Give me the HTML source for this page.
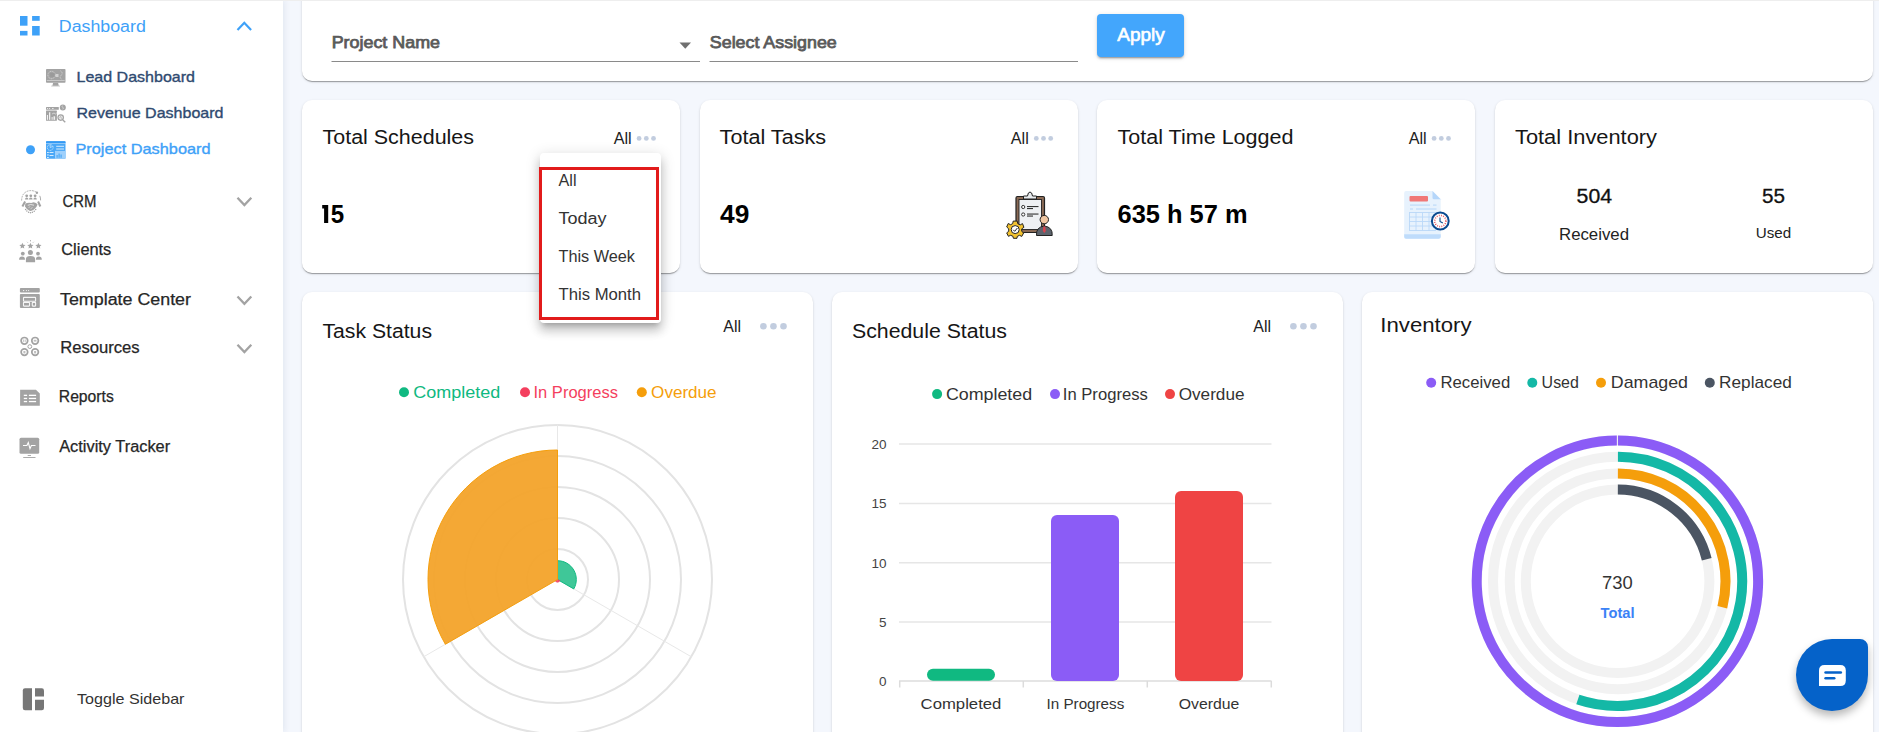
<!DOCTYPE html>
<html><head><meta charset="utf-8"><title>Project Dashboard</title>
<style>
html,body{margin:0;padding:0;}
body{width:1879px;height:732px;overflow:hidden;position:relative;background:#f4f7fd;font-family:"Liberation Sans", sans-serif;}
.sidebar{position:absolute;left:0;top:0;width:283px;height:732px;background:#fff;box-shadow:2px 0 6px rgba(20,40,90,0.07);z-index:2}
.topline{position:absolute;left:0;top:0;width:1879px;height:1px;background:#eeeeee;z-index:8}
.card{position:absolute;background:#fff;box-shadow: 0px 2px 1px -1px rgba(0,0,0,0.2), 0px 1px 1px 0px rgba(0,0,0,0.14), 0px 1px 3px 0px rgba(0,0,0,0.12);z-index:1}
.layer{position:absolute;left:0;top:0;z-index:4;}
.btn{position:absolute;left:1097px;top:14.3px;width:87px;height:42.6px;background:#43a6fc;border-radius:4px;z-index:3;box-shadow:0px 3px 1px -2px rgba(0,0,0,0.2),0px 2px 2px 0px rgba(0,0,0,0.14),0px 1px 5px 0px rgba(0,0,0,0.12)}
.menu{position:absolute;left:540px;top:153px;width:120.5px;height:169.5px;background:#fff;border-radius:4px;z-index:5;box-shadow:0px 5px 5px -3px rgba(0,0,0,0.2),0px 8px 10px 1px rgba(0,0,0,0.14),0px 3px 14px 2px rgba(0,0,0,0.12)}
.redbox{position:absolute;left:539px;top:167.3px;width:114px;height:147px;border:3px solid #e21b1b;z-index:6}
.chat{position:absolute;left:1796px;top:639px;width:72px;height:72px;background:#0562c9;border-radius:50% 8px 50% 50%;z-index:7;box-shadow:0 5px 9px rgba(0,0,0,0.28)}
</style></head><body>
<div class="topline"></div>
<div class="sidebar"></div>
<div class="card" style="left:302px;top:-20px;width:1571px;height:101px;border-radius:10px"></div><div class="card" style="left:302.0px;top:100px;width:378.125px;height:172.8px;border-radius:10px"></div><div class="card" style="left:699.625px;top:100px;width:378.125px;height:172.8px;border-radius:10px"></div><div class="card" style="left:1097.25px;top:100px;width:378.125px;height:172.8px;border-radius:10px"></div><div class="card" style="left:1494.875px;top:100px;width:378.125px;height:172.8px;border-radius:10px"></div><div class="card" style="left:302.0px;top:291.5px;width:510.67px;height:480px;border-radius:10px"></div><div class="card" style="left:832.17px;top:291.5px;width:510.67px;height:480px;border-radius:10px"></div><div class="card" style="left:1362.34px;top:291.5px;width:510.67px;height:480px;border-radius:10px"></div>
<div class="btn"></div>
<svg class="layer" width="1879" height="732" viewBox="0 0 1879 732" style="font-family:"Liberation Sans", sans-serif"><circle cx="557.5" cy="579.5" r="30.5" fill="none" stroke="#e3e3e3" stroke-width="2"/><circle cx="557.5" cy="579.5" r="61.5" fill="none" stroke="#e3e3e3" stroke-width="2"/><circle cx="557.5" cy="579.5" r="92.5" fill="none" stroke="#e3e3e3" stroke-width="2"/><circle cx="557.5" cy="579.5" r="123.5" fill="none" stroke="#e3e3e3" stroke-width="2"/><circle cx="557.5" cy="579.5" r="154.5" fill="none" stroke="#e3e3e3" stroke-width="2"/><line x1="557.5" y1="579.5" x2="557.50" y2="424.50" stroke="#e8e8e8" stroke-width="1"/><line x1="557.5" y1="579.5" x2="691.73" y2="657.00" stroke="#e8e8e8" stroke-width="1"/><line x1="557.5" y1="579.5" x2="423.27" y2="657.00" stroke="#e8e8e8" stroke-width="1"/><path d="M557.5,579.5 L557.50,560.70 A18.8,18.8 0 0 1 573.78,588.90 Z" fill="#35c492" fill-opacity="0.95" stroke="#10b981" stroke-width="1"/><path d="M557.5,579.5 L559.75,580.80 A2.6,2.6 0 0 1 555.25,580.80 Z" fill="#f0506e" fill-opacity="0.95" stroke="#f43f5e" stroke-width="1"/><path d="M557.5,579.5 L445.35,644.25 A129.5,129.5 0 0 1 557.50,450.00 Z" fill="#f3a32a" fill-opacity="0.95" stroke="#f59e0b" stroke-width="1"/><line x1="899" y1="444.1" x2="1271.5" y2="444.1" stroke="#e6e6e6" stroke-width="1.5"/><line x1="899" y1="503.4" x2="1271.5" y2="503.4" stroke="#e6e6e6" stroke-width="1.5"/><line x1="899" y1="562.7" x2="1271.5" y2="562.7" stroke="#e6e6e6" stroke-width="1.5"/><line x1="899" y1="622.0" x2="1271.5" y2="622.0" stroke="#e6e6e6" stroke-width="1.5"/><line x1="899" y1="681" x2="1271.5" y2="681" stroke="#dcdcdc" stroke-width="1.5"/><line x1="899.7" y1="681" x2="899.7" y2="687.5" stroke="#dcdcdc" stroke-width="1.5"/><line x1="1023.3" y1="681" x2="1023.3" y2="687.5" stroke="#dcdcdc" stroke-width="1.5"/><line x1="1147.3" y1="681" x2="1147.3" y2="687.5" stroke="#dcdcdc" stroke-width="1.5"/><line x1="1271.3" y1="681" x2="1271.3" y2="687.5" stroke="#dcdcdc" stroke-width="1.5"/><rect x="927" y="668.8" width="68" height="12" rx="6" fill="#10b981"/><rect x="1051" y="515" width="68" height="166" rx="6" fill="#8b5cf6"/><rect x="1175" y="491" width="68" height="190" rx="6" fill="#ef4444"/><circle cx="1617.6" cy="581.3" r="140.7" fill="none" stroke="#f2f2f2" stroke-width="10"/><path d="M1617.97,440.60 A140.7,140.7 0 1 1 1616.86,440.60" fill="none" stroke="#8b5cf6" stroke-width="10"/><circle cx="1617.6" cy="581.3" r="124.6" fill="none" stroke="#f2f2f2" stroke-width="10"/><path d="M1617.93,456.70 A124.6,124.6 0 1 1 1577.86,699.39" fill="none" stroke="#14b8a6" stroke-width="10"/><circle cx="1617.6" cy="581.3" r="107.9" fill="none" stroke="#f2f2f2" stroke-width="10"/><path d="M1617.88,473.40 A107.9,107.9 0 0 1 1722.34,607.22" fill="none" stroke="#f59e0b" stroke-width="10"/><circle cx="1617.6" cy="581.3" r="91.8" fill="none" stroke="#f2f2f2" stroke-width="10"/><path d="M1617.84,489.50 A91.8,91.8 0 0 1 1706.71,559.25" fill="none" stroke="#4b5563" stroke-width="10"/><circle cx="404" cy="392.3" r="5" fill="#10b981"/><circle cx="525" cy="392.3" r="5" fill="#f43f5e"/><circle cx="641.8" cy="392.3" r="5" fill="#f59e0b"/><circle cx="937.1" cy="394.1" r="5" fill="#10b981"/><circle cx="1055" cy="394.1" r="5" fill="#8b5cf6"/><circle cx="1170" cy="394.1" r="5" fill="#ef4444"/><circle cx="1431.2" cy="382.7" r="5" fill="#8b5cf6"/><circle cx="1532.3" cy="382.7" r="5" fill="#14b8a6"/><circle cx="1601" cy="382.7" r="5" fill="#f59e0b"/><circle cx="1709.8" cy="382.7" r="5" fill="#4b5563"/><circle cx="639.1" cy="138.4" r="2.4" fill="#c2cddf"/><circle cx="646.3000000000001" cy="138.4" r="2.4" fill="#c2cddf"/><circle cx="653.5" cy="138.4" r="2.4" fill="#c2cddf"/><circle cx="1036.3" cy="138.4" r="2.4" fill="#c2cddf"/><circle cx="1043.5" cy="138.4" r="2.4" fill="#c2cddf"/><circle cx="1050.7" cy="138.4" r="2.4" fill="#c2cddf"/><circle cx="1434.1" cy="138.4" r="2.4" fill="#c2cddf"/><circle cx="1441.3" cy="138.4" r="2.4" fill="#c2cddf"/><circle cx="1448.5" cy="138.4" r="2.4" fill="#c2cddf"/><circle cx="763.4" cy="326.3" r="3.3" fill="#c2cddf"/><circle cx="773.4499999999999" cy="326.3" r="3.3" fill="#c2cddf"/><circle cx="783.5" cy="326.3" r="3.3" fill="#c2cddf"/><circle cx="1293.4" cy="326.3" r="3.3" fill="#c2cddf"/><circle cx="1303.45" cy="326.3" r="3.3" fill="#c2cddf"/><circle cx="1313.5" cy="326.3" r="3.3" fill="#c2cddf"/><circle cx="30.5" cy="149.8" r="4.5" fill="#3ea1f8"/><rect x="331.5" y="61" width="368.5" height="1" fill="#8a8a8a"/><rect x="709.5" y="61" width="368.5" height="1" fill="#8a8a8a"/><path d="M679.5,42.5 L691,42.5 L685.25,48.7 Z" fill="#707070"/><g fill="#3ea1f8"><rect x="20" y="16" width="7.5" height="9.7"/><rect x="20" y="30.9" width="7.5" height="4.6"/><rect x="32.1" y="16" width="7.6" height="4.8"/><rect x="32.1" y="26" width="7.6" height="9.5"/></g><path d="M237.5,30 L244.3,22.8 L251.1,30" fill="none" stroke="#3ea1f8" stroke-width="2.2"/><path d="M237.5,197.7 L244.4,205.1 L251.3,197.7" fill="none" stroke="#a3a3a3" stroke-width="2.3"/><path d="M237.5,296.5 L244.4,303.90000000000003 L251.3,296.5" fill="none" stroke="#a3a3a3" stroke-width="2.3"/><path d="M237.5,344.7 L244.4,352.1 L251.3,344.7" fill="none" stroke="#a3a3a3" stroke-width="2.3"/>
<g fill="#a3a3a3">
 <!-- lead dashboard monitor -->
 <rect x="46" y="69" width="19.5" height="13.7" rx="0.8"/>
 <rect x="46.8" y="80.1" width="17.9" height="0.6" fill="#fff" opacity="0.7"/>
 <g fill="none" stroke="#fff" stroke-width="0.7" opacity="0.75">
  <ellipse cx="51.5" cy="75" rx="3.6" ry="3.7" stroke-dasharray="1,0.7"/>
  <path d="M60.5,70.8 Q63.5,73 61,75.5 Q59,77.5 62,79.5" stroke-dasharray="1,0.7"/>
 </g>
 <rect x="50.2" y="73" width="4.5" height="3.8" fill="#9a9a9a"/>
 <rect x="55.5" y="74" width="3" height="3" fill="#fff" opacity="0.5"/>
 <path d="M53.1,82.8 L58.1,82.8 L58.8,85.8 L52.4,85.8Z"/><rect x="51.2" y="85.6" width="8.8" height="0.9" opacity="0.6"/>
 <!-- revenue -->
 <rect x="46" y="107.1" width="12.8" height="2.6" rx="0.5"/>
 <g fill="#fff" opacity="0.8"><rect x="47" y="108" width="1.1" height="0.9"/><rect x="49" y="108" width="1.1" height="0.9"/><rect x="52" y="108" width="1.6" height="0.9"/></g>
 <rect x="46" y="110.5" width="10.9" height="10.2" rx="0.5"/>
 <g fill="#fff" opacity="0.85"><rect x="46.9" y="115" width="1.1" height="4.8"/><rect x="49" y="112.3" width="1.3" height="7.5"/><rect x="51.6" y="117" width="1" height="2.8"/><rect x="53.5" y="116.3" width="1.6" height="3.5"/></g>
 <path d="M52,114 L54,113 L55.5,114 L57.5,112.2" fill="none" stroke="#fff" stroke-width="0.6" opacity="0.85"/>
 <circle cx="62.8" cy="107.5" r="3"/>
 <path d="M62.6,105.6 Q61.5,106.5 62.8,107.4 Q63.8,108.3 62.7,109.3" fill="none" stroke="#fff" stroke-width="0.6" opacity="0.85"/>
 <circle cx="60.7" cy="117.6" r="3.3"/>
 <circle cx="60.7" cy="117.6" r="2.1" fill="#fff" opacity="0.75"/>
 <path d="M59.6,117.8 L60.6,116.4 L61.8,118.8" fill="none" stroke="#a3a3a3" stroke-width="0.6"/>
 <line x1="62.8" y1="120" x2="65.3" y2="122.2" stroke="#a3a3a3" stroke-width="1.4"/>
</g>
<g>
 <rect x="46" y="141.2" width="19.5" height="17.6" rx="0.8" fill="#4ba8f7"/>
 <rect x="46" y="141.2" width="19.5" height="2" rx="0.8" fill="#3499f3"/>
 <rect x="46" y="143.2" width="19.5" height="0.5" fill="#d6ebfd"/>
 <circle cx="50.2" cy="147.5" r="2.9" fill="none" stroke="#d6ebfd" stroke-width="0.8" stroke-dasharray="1.2,0.6"/>
 <path d="M50.2,144.6 L50.2,147.5 L52.5,146.5" fill="none" stroke="#d6ebfd" stroke-width="0.7"/>
 <rect x="56.2" y="145.8" width="7.8" height="1" fill="#d6ebfd"/><rect x="56.2" y="148.5" width="7.8" height="1" fill="#d6ebfd"/>
 <path d="M55,150.9 L65.5,150.9 L65.5,158.8 L55,158.8Z" fill="#9fd0fb"/>
 <g fill="#4ba8f7"><rect x="56.5" y="155" width="1.2" height="2.8"/><rect x="58.5" y="153.5" width="1.2" height="4.3"/><rect x="60.5" y="154.5" width="1.2" height="3.3"/></g>
 <g fill="#d6ebfd"><rect x="47" y="152" width="1.8" height="1"/><rect x="49.5" y="152" width="4" height="1"/><rect x="47" y="154.5" width="1.8" height="1"/><rect x="49.5" y="155" width="4" height="1"/><rect x="47" y="157" width="1.8" height="1"/></g>
</g>
<g fill="#a3a3a3">
 <!-- CRM -->
 <path d="M21.6,200.5 Q21.8,193 28,191 Q33,189.7 37,192.6" fill="none" stroke="#a3a3a3" stroke-width="0.9" stroke-dasharray="1.8,0.9"/>
 <path d="M39.8,195.8 Q40.7,198 40.6,200.4" fill="none" stroke="#a3a3a3" stroke-width="0.9"/>
 <circle cx="36.9" cy="192.8" r="1.2"/>
 <circle cx="26.7" cy="195.8" r="1.4"/><circle cx="30.8" cy="195.8" r="1.4"/><circle cx="35.1" cy="195.8" r="1.4"/>
 <path d="M25,199.6 Q25,197.6 26.7,197.6 Q28.4,197.6 28.4,199.6Z"/><path d="M29,199.6 Q29,197.6 30.8,197.6 Q32.6,197.6 32.6,199.6Z"/><path d="M33.4,199.6 Q33.4,197.6 35.1,197.6 Q36.8,197.6 36.8,199.6Z"/>
 <path d="M21.5,206 L24.2,201 L26,202 L23.3,207Z"/>
 <path d="M37.2,202 L39,201 L41.3,206 L39.4,207Z"/>
 <path d="M25.3,203.6 Q28.5,202.2 31.2,203 L33.6,202.2 Q36.4,202.5 37.6,204.6 Q36.8,207.5 34,209.6 Q31.5,211.4 29.5,210.8 Q26.6,209.5 25,206.6Z"/>
 <path d="M27.8,205.3 Q30.5,203.8 34,205.2" fill="none" stroke="#fff" stroke-width="0.7"/>
 <path d="M28.5,207.6 L30.3,206.6 M30.5,208.8 L32.5,207.5" fill="none" stroke="#fff" stroke-width="0.5"/>
 <g><circle cx="25.6" cy="209.4" r="0.75"/><circle cx="26.9" cy="211" r="0.75"/><circle cx="28.6" cy="212.2" r="0.75"/><circle cx="30.5" cy="212.7" r="0.75"/><circle cx="32.4" cy="212.3" r="0.75"/><circle cx="34.2" cy="211.2" r="0.75"/><circle cx="35.7" cy="209.6" r="0.75"/></g>
 <!-- Clients -->
 <path d="M22.4,242.7 l0.9,2 2.2,0.2 -1.7,1.5 0.5,2.1 -1.9,-1.1 -1.9,1.1 0.5,-2.1 -1.7,-1.5 2.2,-0.2z"/>
 <path d="M30.4,242.7 l0.9,2 2.2,0.2 -1.7,1.5 0.5,2.1 -1.9,-1.1 -1.9,1.1 0.5,-2.1 -1.7,-1.5 2.2,-0.2z"/>
 <path d="M38.4,242.7 l0.9,2 2.2,0.2 -1.7,1.5 0.5,2.1 -1.9,-1.1 -1.9,1.1 0.5,-2.1 -1.7,-1.5 2.2,-0.2z"/>
 <rect x="30" y="240" width="0.8" height="1.4"/><path d="M27,241.8 L28,242.8" stroke="#a3a3a3" stroke-width="0.6"/><path d="M33.8,241.8 L32.8,242.8" stroke="#a3a3a3" stroke-width="0.6"/>
 <circle cx="30.4" cy="252.4" r="2.5"/><path d="M25.9,262.2 L25.9,259 Q25.9,256.1 30.4,256.1 Q35.1,256.1 35.1,259 L35.1,262.2Z"/>
 <circle cx="22.8" cy="253.6" r="1.9"/><path d="M19.1,259.8 Q19.1,256.5 22,256.5 Q25,256.5 25,259.8Z"/>
 <circle cx="38" cy="253.6" r="1.9"/><path d="M35.9,259.8 Q35.9,256.5 38.8,256.5 Q41.8,256.5 41.8,259.8Z"/>
 <!-- Template -->
 <rect x="19.9" y="288.1" width="19.9" height="4.5" rx="1"/>
 <g fill="#fff" opacity="0.8"><rect x="23" y="290" width="1.2" height="1.1"/><rect x="25.9" y="290" width="1" height="1.1"/><rect x="28.1" y="290" width="1" height="1.1"/></g>
 <rect x="19.9" y="294.1" width="19.9" height="13.9" rx="1"/>
 <g fill="none" stroke="#fff" stroke-width="1.1" opacity="0.9"><rect x="23.5" y="297.4" width="12.1" height="3.9" rx="0.5"/><rect x="23.5" y="302.4" width="6" height="3.7" rx="0.5"/><rect x="32.3" y="302.4" width="3.3" height="3.7" rx="0.5"/></g>
 <!-- Resources -->
 <g fill="none" stroke="#a3a3a3" stroke-width="1.7">
  <circle cx="24.4" cy="340.8" r="3.3"/><circle cx="35.1" cy="340.8" r="3.3"/><circle cx="24.4" cy="352.1" r="3.3"/><circle cx="35.1" cy="352.1" r="3.3"/>
  <circle cx="29.8" cy="346.6" r="1.9" stroke-width="1"/>
 </g>
 <g opacity="0.7"><rect x="23.2" y="339.5" width="0.9" height="2.4"/><rect x="24.8" y="339.5" width="0.9" height="2.4"/><rect x="33.7" y="339.8" width="2.8" height="1.8"/><rect x="23.4" y="351" width="2" height="2.4"/><rect x="34.1" y="351" width="2" height="2.4"/></g>
 <!-- Reports -->
 <path d="M20.1,389.8 L35.9,389.8 L39.8,393.6 L39.8,405.8 L20.1,405.8 Z"/>
 <g fill="#fff"><rect x="23.8" y="394.7" width="3.3" height="1.3"/><rect x="28.9" y="394.7" width="7.2" height="1.3"/><rect x="23.8" y="397.8" width="3.3" height="1.3"/><rect x="28.9" y="397.8" width="7.2" height="1.3"/><rect x="23.8" y="400.9" width="3.3" height="1.3"/><rect x="28.9" y="400.9" width="7.2" height="1.3"/></g>
 <!-- Activity -->
 <rect x="19.5" y="437.7" width="19.7" height="16" rx="1.5"/>
 <path d="M23,445.5 L26.9,445.5 L28.3,442.5 L30,448.6 L31.4,445.5 L35.5,445.5" fill="none" stroke="#fff" stroke-width="1.1"/>
 <rect x="27.7" y="455.1" width="3.3" height="0.9"/><rect x="23.2" y="457" width="12.3" height="0.9"/>
</g>
<g fill="#767676">
 <path d="M25,688.3 L32,688.3 L32,710.2 L25,710.2 Q22.8,710.2 22.8,708 L22.8,690.5 Q22.8,688.3 25,688.3Z"/>
 <path d="M35,688.3 L41.8,688.3 Q44,688.3 44,690.5 L44,696.6 L35,696.6Z"/>
 <path d="M35,699.8 L44,699.8 L44,708 Q44,710.2 41.8,710.2 L35,710.2Z"/>
</g>

<g>
 <!-- clipboard -->
 <rect x="1016" y="196.5" width="28.5" height="36" rx="1.5" fill="#8a6a55" stroke="#222" stroke-width="1.2"/>
 <rect x="1019" y="199.5" width="22.5" height="30" fill="#eef0f3" stroke="#222" stroke-width="0.9"/>
 <path d="M1023.5,199 L1023.5,196 L1027.5,196 Q1028,192 1030,192 Q1032,192 1032.5,196 L1036.5,196 L1036.5,199 Z" fill="#e9ecef" stroke="#222" stroke-width="1"/>
 <circle cx="1023.2" cy="207" r="1.6" fill="#fff" stroke="#222" stroke-width="0.9"/>
 <circle cx="1023.2" cy="214.5" r="1.6" fill="#fff" stroke="#222" stroke-width="0.9"/>
 <rect x="1027" y="206" width="11.5" height="1.1" fill="#333"/><rect x="1027" y="208" width="6" height="1.1" fill="#333"/>
 <rect x="1027" y="213.5" width="11.5" height="1.1" fill="#333"/><rect x="1027" y="215.5" width="6" height="1.1" fill="#333"/>
 <!-- gear -->
 <g transform="translate(1015.2,229.3)">
  <path d="M-2,-8.2 L2,-8.2 L2.6,-5.6 L5,-4.4 L7.3,-5.7 L8.7,-2 L6.5,-0.4 L6.5,2 L8.4,3.7 L6.6,7.1 L4.2,6 L2,7.2 L1.8,9 L-1.8,9 L-2.3,7 L-4.5,6 L-6.8,7 L-8.5,3.6 L-6.5,2 L-6.5,-0.5 L-8.5,-2.3 L-7,-5.8 L-4.6,-4.6 L-2.5,-5.7 Z" fill="#f2c230" stroke="#222" stroke-width="1"/>
  <circle cx="0" cy="0.3" r="4" fill="#fff" stroke="#222" stroke-width="1"/>
  <path d="M-2,0.5 L-0.5,2 L2.2,-1.3" fill="none" stroke="#222" stroke-width="1"/>
 </g>
 <!-- person -->
 <path d="M1036.5,235.5 Q1035.8,227 1044.3,226 Q1052.8,227 1052.2,235.5 Z" fill="#5d646d" stroke="#222" stroke-width="1"/>
 <path d="M1043.3,226.5 L1045.3,226.5 L1045.8,231 L1044.3,233 L1042.8,231 Z" fill="#d9434f"/>
 <circle cx="1044.3" cy="219.6" r="4.2" fill="#f0c7a3" stroke="#222" stroke-width="1"/>
</g>
<g>
 <!-- calendar doc -->
 <path d="M1406,191.1 L1432.5,191.1 L1440.7,199.3 L1440.7,236.7 Q1440.7,238.7 1438.7,238.7 L1406,238.7 Q1404.2,238.7 1404.2,236.7 L1404.2,193 Q1404.2,191.1 1406,191.1Z" fill="#e7f2fd"/>
 <path d="M1404.2,234.2 L1440.7,234.2 L1440.7,236.7 Q1440.7,238.7 1438.7,238.7 L1406,238.7 Q1404.2,238.7 1404.2,236.7Z" fill="#bfdcfb"/>
 <path d="M1432.5,191.1 L1440.7,199.3 L1434,199.3 Q1432.5,199.3 1432.5,197.8Z" fill="#b5d6fa"/>
 <rect x="1409.5" y="196" width="18.5" height="5.4" rx="1" fill="#f07777"/>
 <rect x="1410" y="204.4" width="20" height="1.4" fill="#c3def9"/><rect x="1433" y="204.4" width="3.5" height="1.4" fill="#c3def9"/>
 <rect x="1410" y="208.3" width="3" height="1.4" fill="#c3def9"/><rect x="1416" y="208.3" width="20.5" height="1.4" fill="#c3def9"/>
 <g fill="none" stroke="#bad8f8" stroke-width="0.9">
  <rect x="1409.5" y="212.5" width="26" height="18"/>
  <line x1="1409.5" y1="217" x2="1435.5" y2="217"/><line x1="1409.5" y1="221.5" x2="1435.5" y2="221.5"/><line x1="1409.5" y1="226" x2="1435.5" y2="226"/>
  <line x1="1416" y1="212.5" x2="1416" y2="230.5"/><line x1="1422.5" y1="212.5" x2="1422.5" y2="230.5"/><line x1="1429" y1="212.5" x2="1429" y2="230.5"/>
 </g>
 <circle cx="1440.3" cy="221" r="8.4" fill="#fff" stroke="#0b4a8f" stroke-width="2"/>
 <circle cx="1440.3" cy="221" r="5.6" fill="none" stroke="#e8545a" stroke-width="1.6" stroke-dasharray="0.9,1.3"/>
 <path d="M1440,217.5 L1440,221.5 L1442.8,223" fill="none" stroke="#0b4a8f" stroke-width="1.1"/>
</g>
<text x="58.8" y="31.7" font-size="16" font-weight="400" fill="#3ea1f8" text-anchor="start" textLength="87" lengthAdjust="spacingAndGlyphs">Dashboard</text><text x="76.5" y="82.1" font-size="15" font-weight="500" fill="#2f4a70" text-anchor="start" textLength="118.5" lengthAdjust="spacingAndGlyphs" stroke="#2f4a70" stroke-width="0.35">Lead Dashboard</text><text x="76.5" y="118" font-size="15" font-weight="500" fill="#2f4a70" text-anchor="start" textLength="147" lengthAdjust="spacingAndGlyphs" stroke="#2f4a70" stroke-width="0.35">Revenue Dashboard</text><text x="75.5" y="154.3" font-size="15" font-weight="500" fill="#3ea1f8" text-anchor="start" textLength="135" lengthAdjust="spacingAndGlyphs" stroke="#3ea1f8" stroke-width="0.35">Project Dashboard</text><text x="62.5" y="207.4" font-size="16" font-weight="400" fill="#262626" text-anchor="start" textLength="34" lengthAdjust="spacingAndGlyphs" stroke="#262626" stroke-width="0.25">CRM</text><text x="61.3" y="255.2" font-size="16" font-weight="400" fill="#262626" text-anchor="start" textLength="50" lengthAdjust="spacingAndGlyphs" stroke="#262626" stroke-width="0.25">Clients</text><text x="60" y="305.3" font-size="16" font-weight="400" fill="#262626" text-anchor="start" textLength="131" lengthAdjust="spacingAndGlyphs" stroke="#262626" stroke-width="0.25">Template Center</text><text x="60.2" y="352.8" font-size="16" font-weight="400" fill="#262626" text-anchor="start" textLength="79.5" lengthAdjust="spacingAndGlyphs" stroke="#262626" stroke-width="0.25">Resources</text><text x="58.8" y="402" font-size="16" font-weight="400" fill="#262626" text-anchor="start" textLength="55" lengthAdjust="spacingAndGlyphs" stroke="#262626" stroke-width="0.25">Reports</text><text x="59.2" y="451.8" font-size="16" font-weight="400" fill="#262626" text-anchor="start" textLength="111" lengthAdjust="spacingAndGlyphs" stroke="#262626" stroke-width="0.25">Activity Tracker</text><text x="77" y="704" font-size="14.5" font-weight="400" fill="#333" text-anchor="start" textLength="107.5" lengthAdjust="spacingAndGlyphs">Toggle Sidebar</text><text x="331.7" y="48" font-size="16" font-weight="400" fill="#5a5a5a" text-anchor="start" textLength="108.3" lengthAdjust="spacingAndGlyphs" stroke="#5a5a5a" stroke-width="0.75">Project Name</text><text x="709.8" y="48" font-size="16" font-weight="400" fill="#5a5a5a" text-anchor="start" textLength="127" lengthAdjust="spacingAndGlyphs" stroke="#5a5a5a" stroke-width="0.75">Select Assignee</text><text x="1117.3" y="40.9" font-size="17.5" font-weight="400" fill="#ffffff" text-anchor="start" textLength="47.5" lengthAdjust="spacingAndGlyphs" stroke="#fff" stroke-width="0.6">Apply</text><text x="322.5" y="144.3" font-size="20" font-weight="400" fill="#161616" text-anchor="start" textLength="151.5" lengthAdjust="spacingAndGlyphs">Total Schedules</text><text x="719.6" y="144.3" font-size="20" font-weight="400" fill="#161616" text-anchor="start" textLength="106.5" lengthAdjust="spacingAndGlyphs">Total Tasks</text><text x="1117.5" y="144.3" font-size="20" font-weight="400" fill="#161616" text-anchor="start" textLength="176" lengthAdjust="spacingAndGlyphs">Total Time Logged</text><text x="1515" y="144.3" font-size="20" font-weight="400" fill="#161616" text-anchor="start" textLength="142" lengthAdjust="spacingAndGlyphs">Total Inventory</text><text x="613.7" y="144.0" font-size="16.6" font-weight="400" fill="#222" text-anchor="start" textLength="18.0" lengthAdjust="spacingAndGlyphs">All</text><text x="1010.8" y="144.0" font-size="16.6" font-weight="400" fill="#222" text-anchor="start" textLength="18.0" lengthAdjust="spacingAndGlyphs">All</text><text x="1408.7" y="144.0" font-size="16.6" font-weight="400" fill="#222" text-anchor="start" textLength="18.0" lengthAdjust="spacingAndGlyphs">All</text><text x="330.8" y="222.7" font-size="25" font-weight="700" fill="#000" text-anchor="start" textLength="13.4" lengthAdjust="spacingAndGlyphs">5</text><path d="M322.2,205 L328.2,205 L328.2,223 L324.1,223 L324.1,208.6 L322.2,208.6 Z" fill="#000"/><text x="720" y="222.7" font-size="25" font-weight="700" fill="#000" text-anchor="start" textLength="29.3" lengthAdjust="spacingAndGlyphs">49</text><text x="1117.5" y="222.7" font-size="25" font-weight="700" fill="#000" text-anchor="start" textLength="130" lengthAdjust="spacingAndGlyphs">635 h 57 m</text><text x="1576.6" y="203.1" font-size="19.5" font-weight="400" fill="#111" text-anchor="start" textLength="35.5" lengthAdjust="spacingAndGlyphs" stroke="#111" stroke-width="0.3">504</text><text x="1762.1" y="203.1" font-size="19.5" font-weight="400" fill="#111" text-anchor="start" textLength="23" lengthAdjust="spacingAndGlyphs" stroke="#111" stroke-width="0.3">55</text><text x="1559" y="240" font-size="16" font-weight="400" fill="#222" text-anchor="start" textLength="70" lengthAdjust="spacingAndGlyphs">Received</text><text x="1755.8" y="238" font-size="14.5" font-weight="400" fill="#222" text-anchor="start" textLength="35.4" lengthAdjust="spacingAndGlyphs">Used</text><text x="322.5" y="337.5" font-size="20" font-weight="400" fill="#161616" text-anchor="start" textLength="109.5" lengthAdjust="spacingAndGlyphs">Task Status</text><text x="852" y="337.5" font-size="20" font-weight="400" fill="#161616" text-anchor="start" textLength="155" lengthAdjust="spacingAndGlyphs">Schedule Status</text><text x="1380.3" y="331.6" font-size="20" font-weight="400" fill="#161616" text-anchor="start" textLength="91.3" lengthAdjust="spacingAndGlyphs">Inventory</text><text x="723.3" y="332.1" font-size="17" font-weight="400" fill="#222" text-anchor="start" textLength="17.7" lengthAdjust="spacingAndGlyphs">All</text><text x="1253.3" y="332.1" font-size="17" font-weight="400" fill="#222" text-anchor="start" textLength="17.7" lengthAdjust="spacingAndGlyphs">All</text><text x="413.2" y="398.1" font-size="17" font-weight="400" fill="#10b981" text-anchor="start" textLength="87" lengthAdjust="spacingAndGlyphs">Completed</text><text x="533.5" y="398.1" font-size="17" font-weight="400" fill="#f43f5e" text-anchor="start" textLength="84.5" lengthAdjust="spacingAndGlyphs">In Progress</text><text x="651.1" y="398.1" font-size="17" font-weight="400" fill="#f59e0b" text-anchor="start" textLength="65.5" lengthAdjust="spacingAndGlyphs">Overdue</text><text x="945.9" y="400" font-size="17" font-weight="400" fill="#333" text-anchor="start" textLength="86.2" lengthAdjust="spacingAndGlyphs">Completed</text><text x="1062.8" y="400" font-size="17" font-weight="400" fill="#333" text-anchor="start" textLength="85" lengthAdjust="spacingAndGlyphs">In Progress</text><text x="1178.7" y="400" font-size="17" font-weight="400" fill="#333" text-anchor="start" textLength="65.8" lengthAdjust="spacingAndGlyphs">Overdue</text><text x="1440.5" y="388.3" font-size="17" font-weight="400" fill="#333" text-anchor="start" textLength="69.7" lengthAdjust="spacingAndGlyphs">Received</text><text x="1541.6" y="388.3" font-size="17" font-weight="400" fill="#333" text-anchor="start" textLength="37.3" lengthAdjust="spacingAndGlyphs">Used</text><text x="1610.8" y="388.3" font-size="17" font-weight="400" fill="#333" text-anchor="start" textLength="77.2" lengthAdjust="spacingAndGlyphs">Damaged</text><text x="1719.1" y="388.3" font-size="17" font-weight="400" fill="#333" text-anchor="start" textLength="72.7" lengthAdjust="spacingAndGlyphs">Replaced</text><text x="886.6" y="448.90000000000003" font-size="13.5" font-weight="400" fill="#444" text-anchor="end">20</text><text x="886.6" y="508.2" font-size="13.5" font-weight="400" fill="#444" text-anchor="end">15</text><text x="886.6" y="567.5" font-size="13.5" font-weight="400" fill="#444" text-anchor="end">10</text><text x="886.6" y="626.8" font-size="13.5" font-weight="400" fill="#444" text-anchor="end">5</text><text x="886.6" y="686.0999999999999" font-size="13.5" font-weight="400" fill="#444" text-anchor="end">0</text><text x="961" y="709.1" font-size="15" font-weight="400" fill="#333" text-anchor="middle" textLength="80.8" lengthAdjust="spacingAndGlyphs">Completed</text><text x="1085.4" y="709.1" font-size="15" font-weight="400" fill="#333" text-anchor="middle" textLength="77.8" lengthAdjust="spacingAndGlyphs">In Progress</text><text x="1209.1" y="709.1" font-size="15" font-weight="400" fill="#333" text-anchor="middle" textLength="60.6" lengthAdjust="spacingAndGlyphs">Overdue</text><text x="1617.3" y="589.2" font-size="17.5" font-weight="400" fill="#333" text-anchor="middle" textLength="30.7" lengthAdjust="spacingAndGlyphs">730</text><text x="1617.6" y="618.1" font-size="15" font-weight="700" fill="#3b82f6" text-anchor="middle" textLength="34" lengthAdjust="spacingAndGlyphs">Total</text></svg>
<div class="menu"></div>
<div class="redbox"></div>
<svg class="layer" style="z-index:6;font-family:"Liberation Sans", sans-serif" width="1879" height="732" viewBox="0 0 1879 732"><text x="558.5" y="185.9" font-size="16" font-weight="400" fill="#333" text-anchor="start" textLength="18" lengthAdjust="spacingAndGlyphs">All</text><text x="558.5" y="223.8" font-size="16" font-weight="400" fill="#333" text-anchor="start" textLength="48" lengthAdjust="spacingAndGlyphs">Today</text><text x="558.5" y="261.9" font-size="16" font-weight="400" fill="#333" text-anchor="start" textLength="76.5" lengthAdjust="spacingAndGlyphs">This Week</text><text x="558.5" y="299.9" font-size="16" font-weight="400" fill="#333" text-anchor="start" textLength="82.5" lengthAdjust="spacingAndGlyphs">This Month</text></svg>
<div class="chat"></div>
<svg class="layer" style="z-index:7" width="1879" height="732" viewBox="0 0 1879 732">
<path d="M1824.5,665 L1840.3,665 Q1845.8,665 1845.8,670.5 L1845.8,680.6 Q1845.8,686.1 1840.3,686.1 L1819,686.1 L1819,670.5 Q1819,665 1824.5,665 Z" fill="#fff"/>
<line x1="1825.6" y1="672.5" x2="1840.8" y2="672.5" stroke="#0562c9" stroke-width="2.6" stroke-linecap="round"/>
<line x1="1825.6" y1="678.3" x2="1834.2" y2="678.3" stroke="#0562c9" stroke-width="2.6" stroke-linecap="round"/>
</svg>
</body></html>
